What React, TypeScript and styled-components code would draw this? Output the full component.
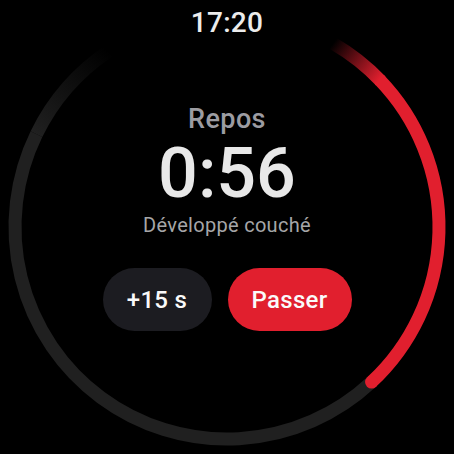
import styled, { createGlobalStyle } from "styled-components";

const GlobalStyle = createGlobalStyle`
  html, body {
    margin: 0;
    padding: 0;
    background: #000;
  }
`;

const CX = 227;
const CY = 227;
const R = 212;
const STROKE = 13;
const RED = "#e11f2e";
const TRACK = "#202020";

// angle in degrees, 0 = 12 o'clock, clockwise
const polar = (deg: number) => {
  const rad = (deg * Math.PI) / 180;
  return { x: CX + R * Math.sin(rad), y: CY - R * Math.cos(rad) };
};

const arc = (from: number, to: number) => {
  const a = polar(from);
  const b = polar(to);
  const large = to - from > 180 ? 1 : 0;
  return `M ${a.x} ${a.y} A ${R} ${R} 0 ${large} 1 ${b.x} ${b.y}`;
};

function Ring({ progressEnd }: { progressEnd: number }) {
  const redFadeStart = polar(30);
  const redFadeEnd = polar(46);
  const grayFadeStart = polar(296);
  const grayFadeEnd = polar(326);
  const cap = polar(progressEnd);

  return (
    <RingSvg width="454" height="454" viewBox="0 0 454 454">
      <defs>
        <linearGradient
          id="redFade"
          gradientUnits="userSpaceOnUse"
          x1={redFadeStart.x}
          y1={redFadeStart.y}
          x2={redFadeEnd.x}
          y2={redFadeEnd.y}
        >
          <stop offset="0" stopColor={RED} stopOpacity="0" />
          <stop offset="1" stopColor={RED} stopOpacity="1" />
        </linearGradient>
        <linearGradient
          id="grayFade"
          gradientUnits="userSpaceOnUse"
          x1={grayFadeStart.x}
          y1={grayFadeStart.y}
          x2={grayFadeEnd.x}
          y2={grayFadeEnd.y}
        >
          <stop offset="0" stopColor={TRACK} stopOpacity="1" />
          <stop offset="1" stopColor={TRACK} stopOpacity="0" />
        </linearGradient>
      </defs>
      <g fill="none" strokeWidth={STROKE}>
        <path d={arc(progressEnd, 296)} stroke={TRACK} />
        <path d={arc(296, 326)} stroke="url(#grayFade)" />
        <path d={arc(30, 46.5)} stroke="url(#redFade)" />
        <path d={arc(46, progressEnd)} stroke={RED} />
      </g>
      <circle cx={cap.x} cy={cap.y} r={STROKE / 2} fill={RED} />
    </RingSvg>
  );
}

function App() {
  return (
    <>
      <GlobalStyle />
      <Screen>
        <Ring progressEnd={137} />
        <Content>
          <Clock>17:20</Clock>
          <Center>
            <Label>Repos</Label>
            <Timer>0:56</Timer>
            <Exercise>Développé couché</Exercise>
            <Actions>
              <PillButton $variant="secondary">+15 s</PillButton>
              <PillButton $variant="primary">Passer</PillButton>
            </Actions>
          </Center>
        </Content>
      </Screen>
    </>
  );
}

const Screen = styled.div`
  position: relative;
  width: 454px;
  height: 454px;
  background: #000;
  overflow: hidden;
  font-family: Roboto, "Noto Sans", "Liberation Sans", sans-serif;
`;

const RingSvg = styled.svg`
  position: absolute;
  inset: 0;
`;

const Content = styled.div`
  position: relative;
  display: flex;
  flex-direction: column;
  align-items: center;
  height: 100%;
`;

const Clock = styled.div`
  margin-top: 9px;
  font-size: 28px;
  line-height: 28px;
  font-weight: 500;
  color: #ececec;
  letter-spacing: 0.3px;
`;

const Center = styled.div`
  display: flex;
  flex-direction: column;
  align-items: center;
  margin-top: 67px;
`;

const Label = styled.div`
  font-size: 27px;
  line-height: 30px;
  font-weight: 500;
  color: #9c9ca2;
  letter-spacing: 0.4px;
`;

const Timer = styled.div`
  margin-top: 8px;
  font-size: 70px;
  line-height: 62px;
  font-weight: 500;
  color: #e8e8e8;
`;

const Exercise = styled.div`
  margin-top: 10px;
  font-size: 20px;
  line-height: 22px;
  font-weight: 400;
  color: #a6a6a8;
  letter-spacing: 0.3px;
`;

const Actions = styled.div`
  display: flex;
  gap: 16px;
  margin-top: 32px;
`;

const PillButton = styled.button<{ $variant: "primary" | "secondary" }>`
  height: 63px;
  padding: 0 ${({ $variant }) => ($variant === "primary" ? "24px" : "24px")};
  min-width: ${({ $variant }) => ($variant === "primary" ? "124px" : "109px")};
  border: none;
  border-radius: 32px;
  background: ${({ $variant }) => ($variant === "primary" ? RED : "#1c1c21")};
  color: #fafafa;
  font-family: inherit;
  font-size: 24px;
  font-weight: 500;
  letter-spacing: 0.3px;
`;

export default App;
